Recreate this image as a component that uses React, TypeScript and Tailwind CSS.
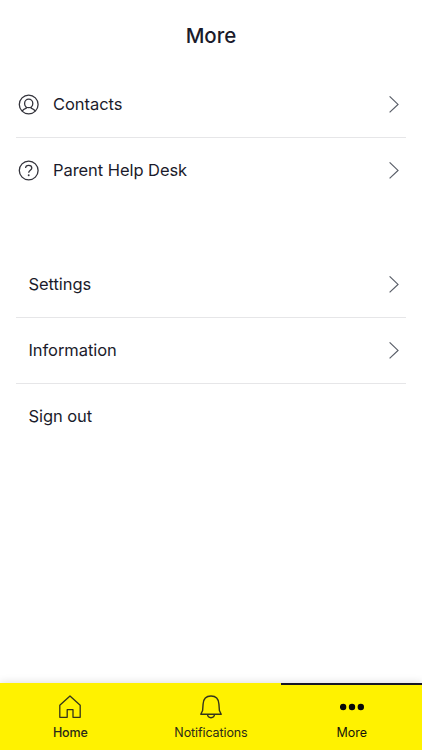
import React from 'react';

const Chevron = () => (
  <svg className="mr-1.5 h-[18px] w-3" viewBox="0 0 12 18" fill="none" stroke="#5a5f69" strokeWidth="1.2">
    <path d="M1.6 .4L10 8.4L1.6 16.4" />
  </svg>
);

const PersonIcon = () => (
  <svg className="h-[22px] w-[22px]" viewBox="0 0 22 22" fill="none" stroke="#34343c" strokeWidth="1.3">
    <circle cx="10.7" cy="10.5" r="9.4" />
    <ellipse cx="10.7" cy="9.4" rx="4.1" ry="4.3" />
    <path d="M4.1 17.1C5.1 15.3 6.6 14.7 8.3 14.1V12.9M17.3 17.1C16.3 15.3 14.8 14.7 13.1 14.1V12.9" />
  </svg>
);

const HelpIcon = () => (
  <svg className="h-[22px] w-[22px]" viewBox="0 0 22 22" fill="none" stroke="#34343c" strokeWidth="1.3">
    <circle cx="10.7" cy="10.5" r="9.4" />
    <path d="M7.6 8.1C7.6 6.3 8.9 5.3 10.7 5.3S13.8 6.4 13.8 8C13.8 10.2 10.7 10.3 10.7 12.7" />
    <circle cx="10.7" cy="15.3" r=".95" fill="#34343c" stroke="none" />
  </svg>
);

type RowProps = { label: string; icon?: React.ReactNode; border?: boolean; arrow?: boolean };

const Row = ({ label, icon, border = false, arrow = true }: RowProps) => (
  <li className={`flex h-[66px] items-center border-b ${border ? 'border-[#e6e6e8]' : 'border-transparent'}`}>
    {icon ? <span className="ml-[2px] mr-[13px]">{icon}</span> : <span className="w-[12.5px]" />}
    <span className="flex-1 pb-[2px] text-[16.5px] leading-6 tracking-[-0.06px]">{label}</span>
    {arrow && <Chevron />}
  </li>
);

export default function App() {
  return (
    <div className="flex h-[750px] w-[422px] flex-col overflow-hidden bg-white font-['Inter',sans-serif] text-[#1b1b2b]">
      <header className="flex h-[72px] items-center justify-center">
        <h1 className="text-[20.5px] font-medium leading-8">More</h1>
      </header>
      <main className="flex-1 px-4">
        <ul>
          <Row label="Contacts" icon={<PersonIcon />} border />
          <Row label="Parent Help Desk" icon={<HelpIcon />} />
        </ul>
        <ul className="mt-12">
          <Row label="Settings" border />
          <Row label="Information" border />
          <Row label="Sign out" arrow={false} />
        </ul>
      </main>
      <nav className="grid h-[67px] grid-cols-3 bg-[#fff200] text-[12.5px] leading-4 shadow-[0_-1px_8px_rgba(0,0,0,0.12)]">
        <a className="flex flex-col items-center border-t-2 border-transparent pt-[10px] font-medium text-[#2b2b18]">
          <svg className="h-6 w-6" viewBox="0 0 24 24" fill="none" stroke="#34341c" strokeWidth="1.3" strokeLinejoin="round">
            <path d="M1.8 10.3L12 1L22.2 10.3V22.3H15V14.7H9.2V22.3H1.8Z" />
          </svg>
          <span className="mt-[6px] tracking-[-0.1px]">Home</span>
        </a>
        <a className="flex flex-col items-center border-t-2 border-transparent pt-[10px] text-[#2b2b18]">
          <svg className="h-6 w-6" viewBox="0 0 24 24" fill="none" stroke="#34341c" strokeWidth="1.4" strokeLinejoin="round">
            <path d="M1.8 19.3L3.6 15.5L4.1 9C4.4 4 7.2 1 12 1S19.6 4 19.9 9L20.4 15.5L22.2 19.3ZM8.5 19.3C8.8 23.8 15.2 23.8 15.5 19.3" />
          </svg>
          <span className="mt-[6px] tracking-[-0.1px]">Notifications</span>
        </a>
        <a className="flex flex-col items-center border-t-2 border-[#171725] pt-[10px] text-[#14140a]">
          <svg className="h-6 w-6" viewBox="0 0 24 24" fill="#080808">
            <circle cx="3.1" cy="12" r="3.2" /><circle cx="12" cy="12" r="3.2" /><circle cx="20.8" cy="12" r="3.2" />
          </svg>
          <span className="mt-[6px]">More</span>
        </a>
      </nav>
    </div>
  );
}
